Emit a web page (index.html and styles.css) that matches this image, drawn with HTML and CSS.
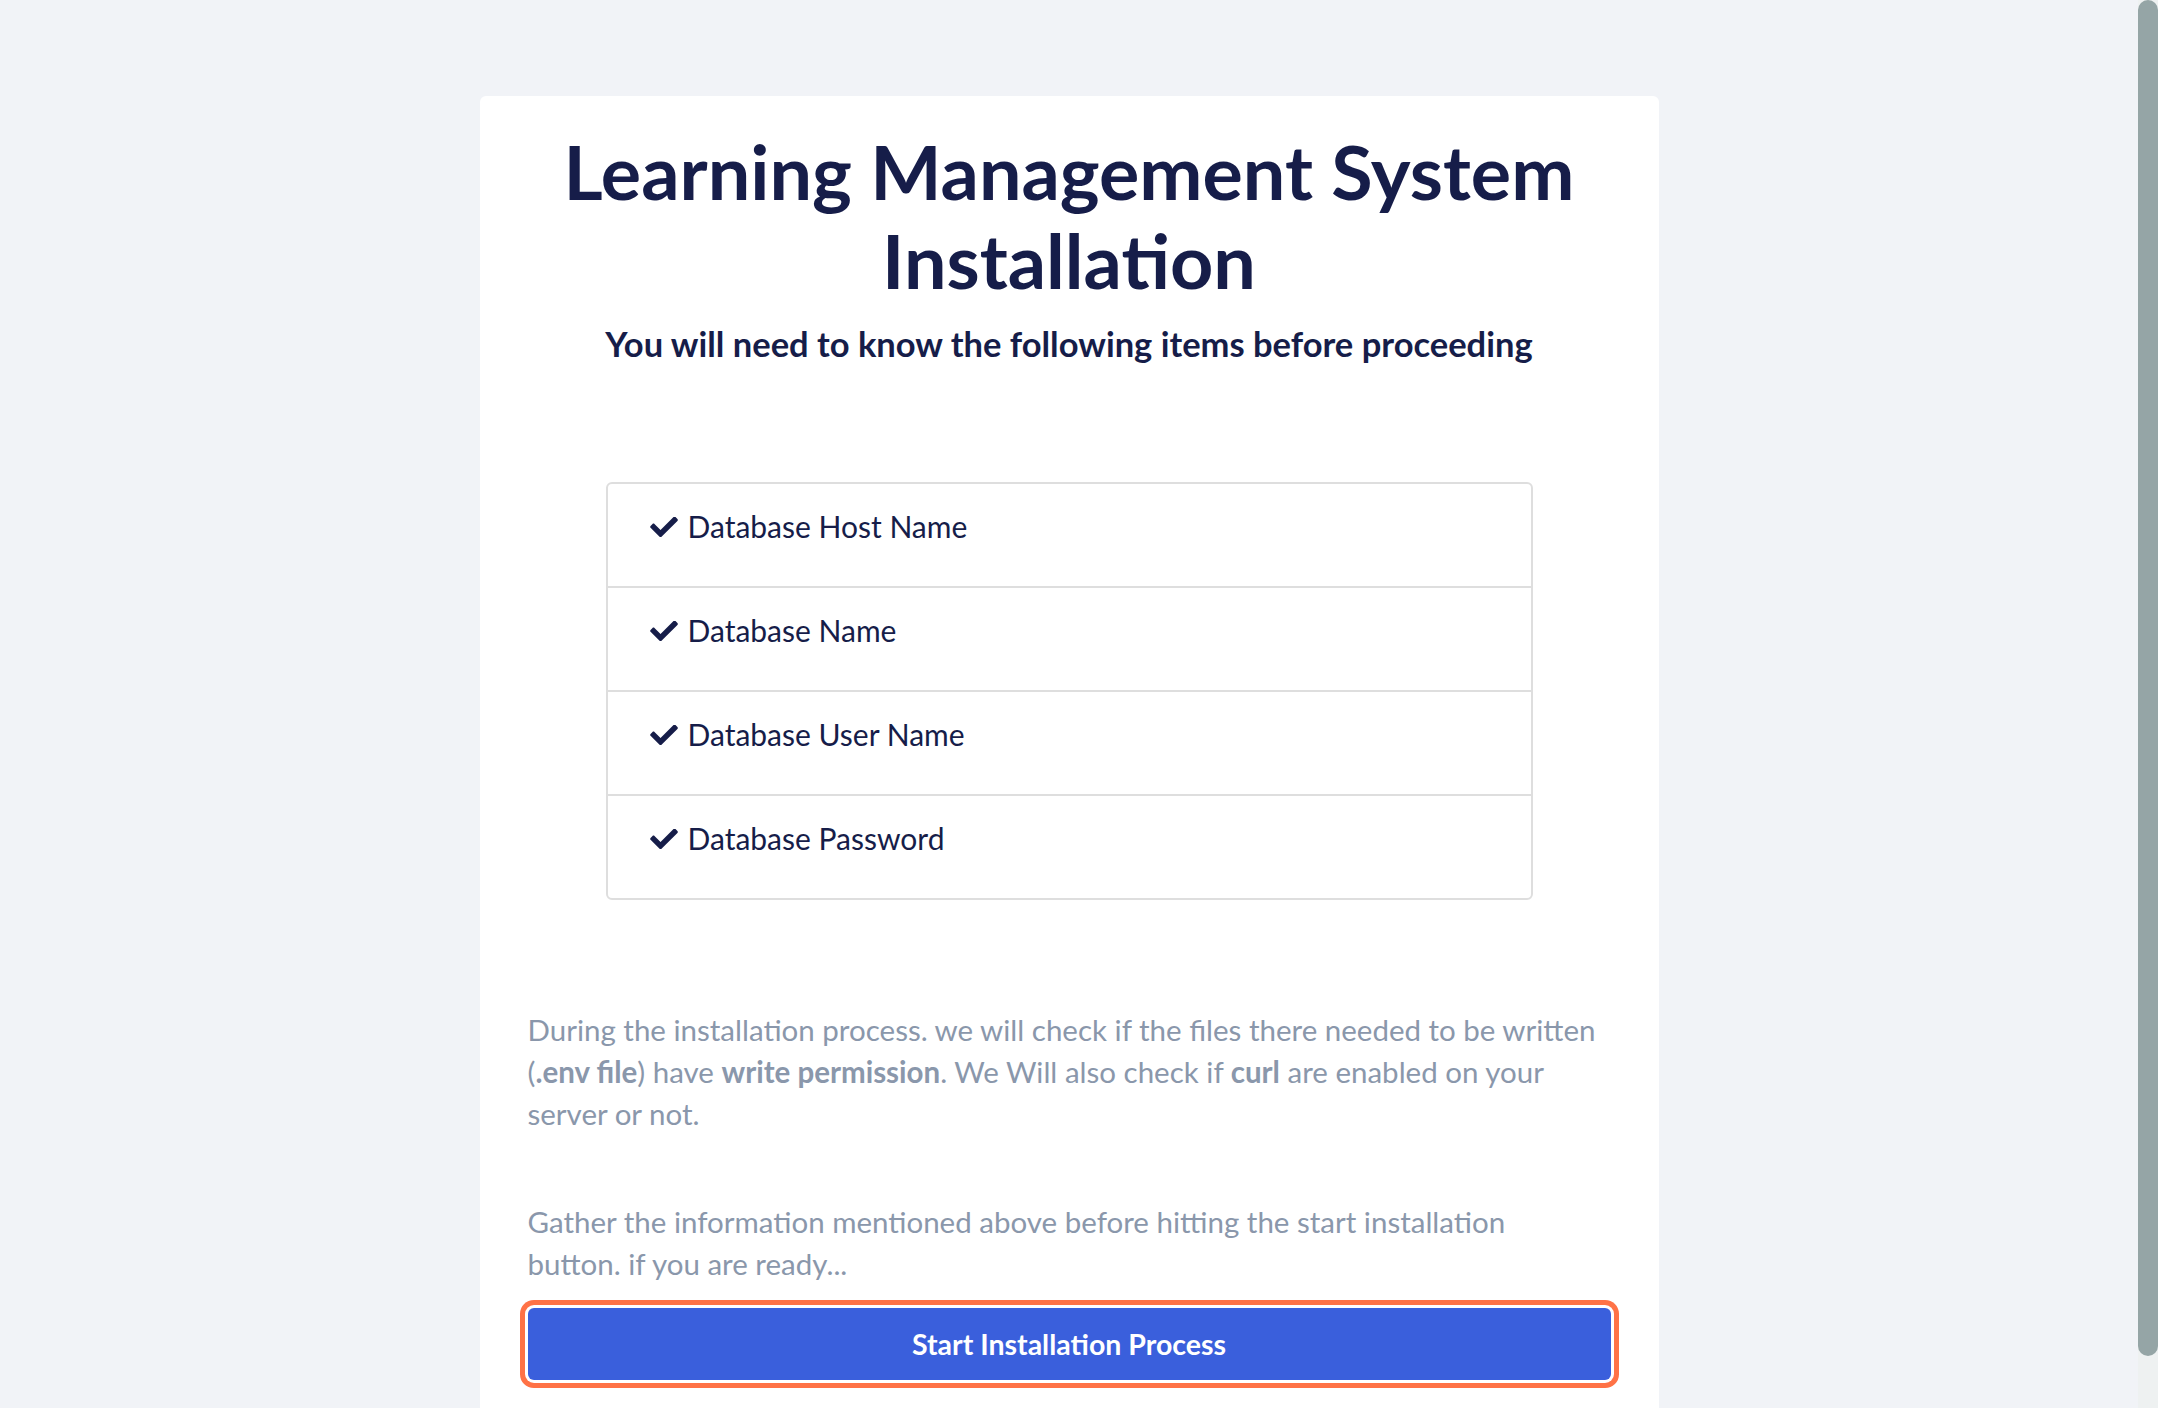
FILE: index.html
```html
<!DOCTYPE html>
<html lang="en">
<head>
<meta charset="utf-8">
<title>Learning Management System Installation</title>
<link rel="stylesheet" href="styles.css">
</head>
<body>
<main class="card">
  <h1 class="title">Learning Management System Installation</h1>
  <h2 class="subtitle">You will need to know the following items before proceeding</h2>
  <ul class="checklist">
    <li class="check-item"><svg class="check-icon" viewBox="0 72 512 370" aria-hidden="true"><path d="M173.898 439.404l-166.4-166.4c-9.997-9.997-9.997-26.206 0-36.204l36.203-36.204c9.997-9.998 26.207-9.998 36.204 0L192 312.69 432.095 72.596c9.997-9.997 26.207-9.997 36.204 0l36.203 36.204c9.997 9.997 9.997 26.206 0 36.204l-294.4 294.401c-9.998 9.997-26.207 9.997-36.204-.001z"/></svg><span>Database Host Name</span></li>
    <li class="check-item"><svg class="check-icon" viewBox="0 72 512 370" aria-hidden="true"><path d="M173.898 439.404l-166.4-166.4c-9.997-9.997-9.997-26.206 0-36.204l36.203-36.204c9.997-9.998 26.207-9.998 36.204 0L192 312.69 432.095 72.596c9.997-9.997 26.207-9.997 36.204 0l36.203 36.204c9.997 9.997 9.997 26.206 0 36.204l-294.4 294.401c-9.998 9.997-26.207 9.997-36.204-.001z"/></svg><span>Database Name</span></li>
    <li class="check-item"><svg class="check-icon" viewBox="0 72 512 370" aria-hidden="true"><path d="M173.898 439.404l-166.4-166.4c-9.997-9.997-9.997-26.206 0-36.204l36.203-36.204c9.997-9.998 26.207-9.998 36.204 0L192 312.69 432.095 72.596c9.997-9.997 26.207-9.997 36.204 0l36.203 36.204c9.997 9.997 9.997 26.206 0 36.204l-294.4 294.401c-9.998 9.997-26.207 9.997-36.204-.001z"/></svg><span>Database User Name</span></li>
    <li class="check-item"><svg class="check-icon" viewBox="0 72 512 370" aria-hidden="true"><path d="M173.898 439.404l-166.4-166.4c-9.997-9.997-9.997-26.206 0-36.204l36.203-36.204c9.997-9.998 26.207-9.998 36.204 0L192 312.69 432.095 72.596c9.997-9.997 26.207-9.997 36.204 0l36.203 36.204c9.997 9.997 9.997 26.206 0 36.204l-294.4 294.401c-9.998 9.997-26.207 9.997-36.204-.001z"/></svg><span>Database Password</span></li>
  </ul>
  <p class="note note-first">During the installation process. we will check if the files there needed to be written (<strong>.env file</strong>) have <strong>write permission</strong>. We Will also check if <strong>curl</strong> are enabled on your server or not.</p>
  <p class="note note-second">Gather the information mentioned above before hitting the start installation button. if you are ready...</p>
  <button class="start-btn" type="button">Start Installation Process</button>
</main>
<div class="scrollbar" aria-hidden="true"><div class="scrollbar-thumb"></div></div>
</body>
</html>
```

FILE: styles.css
```css
html {
  background: #f1f3f7;
  scrollbar-width: none;
}
body {
  margin: 0;
  padding: 96px 20px 32px 0;
  background: #f1f3f7;
  font-family: "Lato", "Noto Sans", sans-serif;
  color: #161d49;
}
.card {
  width: 1179px;
  box-sizing: border-box;
  margin: 0 auto;
  padding: 30px 48px 48px;
  background: #ffffff;
  border-radius: 6px;
}
.title {
  margin: 0;
  font-size: 75.5px;
  line-height: 89px;
  font-weight: 700;
  text-align: center;
  color: #161d49;
}
.subtitle {
  margin: 21px 0 0;
  font-size: 34.5px;
  line-height: 38px;
  font-weight: 700;
  text-align: center;
  color: #161d49;
}
.checklist {
  list-style: none;
  margin: 119px auto 0;
  padding: 0;
  width: 923px;
  border: 2px solid #dedede;
  border-radius: 6px;
}
.check-item {
  display: flex;
  align-items: center;
  gap: 10px;
  padding: 20px 40px 37px 42px;
  font-size: 30px;
  line-height: 45px;
  border-bottom: 2px solid #dedede;
}
.check-item:last-child {
  border-bottom: none;
}
.check-icon {
  width: 28px;
  height: 20px;
  fill: #161d49;
  flex: none;
}
.note {
  margin: 0;
  font-size: 29.5px;
  line-height: 42px;
  color: #8a97ab;
}
.note strong {
  font-weight: 700;
}
.note-first {
  margin-top: 109px;
}
.note-second {
  margin-top: 66px;
  max-width: 1030px;
}
.start-btn {
  display: block;
  width: 100%;
  height: 72px;
  margin-top: 23px;
  border: none;
  border-radius: 6px;
  background: #3a5fdc;
  color: #ffffff;
  font-family: "Lato", "Noto Sans", sans-serif;
  font-size: 28.5px;
  font-weight: 700;
  box-shadow: 0 0 0 3px #ffffff, 0 0 0 8px #ff7246;
  cursor: pointer;
}
.scrollbar {
  position: fixed;
  top: 0;
  right: 0;
  width: 20px;
  height: 100vh;
  background: #eef1f1;
}
.scrollbar-thumb {
  height: 1356px;
  background: #95a5a6;
  border-radius: 10px;
}
```
